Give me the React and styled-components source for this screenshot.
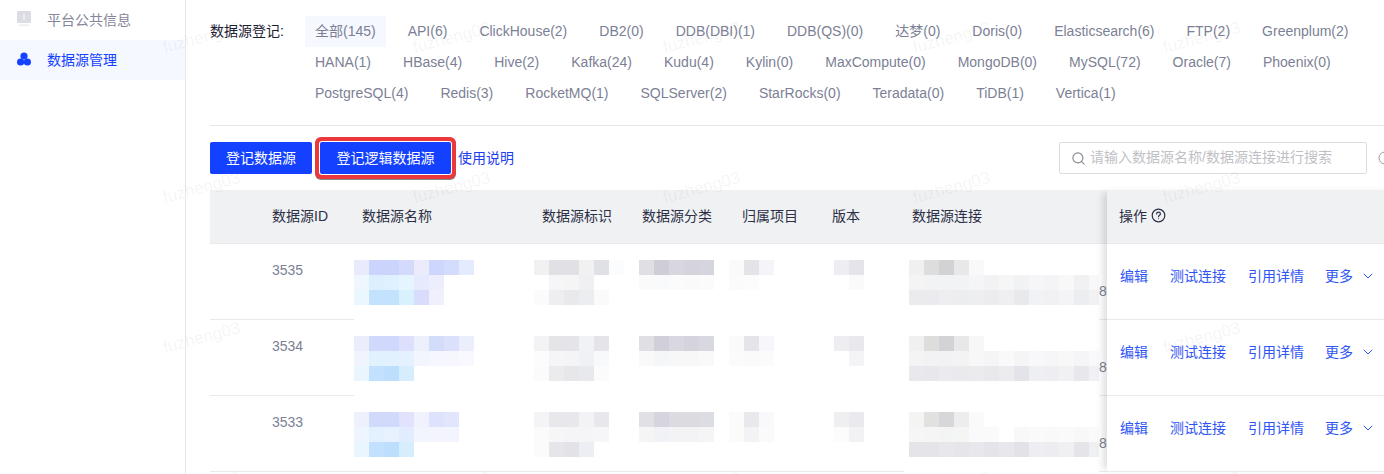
import React from "react";
import styled, { createGlobalStyle } from "styled-components";
import { ChevronDown, RotateCw, Search } from "lucide-react";

const Global = createGlobalStyle`
  html, body { margin: 0; padding: 0; background: #fff; }
  body {
    width: 1384px; height: 474px; overflow: hidden;
    font-family: "Liberation Sans", "Noto Sans CJK SC", sans-serif;
    font-size: 14px;
  }
  * { box-sizing: border-box; }
`;

const Page = styled.div`
  position: relative; display: flex; width: 1384px; height: 474px; overflow: hidden;
`;
const Sidebar = styled.nav`
  flex: 0 0 186px; border-right: 1px solid #e8e8ea;
`;
const NavItem = styled.div`
  display: flex; align-items: center; gap: 16px; height: 40px; padding: 0 0 2px 17px;
  color: ${p => (p.$active ? "#1440ff" : "#85869a")};
  background: ${p => (p.$active ? "#f5f8ff" : "transparent")};
`;
const Main = styled.main`
  flex: 0 0 1211px; padding: 16px 0 0 24px;
`;
const Filter = styled.section`
  display: flex; padding-bottom: 16px; border-bottom: 1px solid #e6e6e8;
`;
const FilterLabel = styled.div`
  flex: 0 0 95px; line-height: 31px; color: #1c2033;
`;
const TagList = styled.div`
  display: flex; flex-wrap: wrap; column-gap: 12px; width: 1075px;
`;
const Tag = styled.span`
  height: 31px; line-height: 31px; padding: 0 10px; color: #7c7f95;
  background: ${p => (p.$active ? "#f5f8ff" : "transparent")};
`;
const Toolbar = styled.div`
  display: flex; align-items: center; justify-content: space-between; margin: 16px 4px 16px 0;
`;
const Actions = styled.div`
  display: flex; align-items: center;
`;
const Button = styled.button`
  height: 32px; width: ${p => p.$w}px; margin-right: ${p => p.$mr}px; padding: 0 0 2px; border: 0; border-radius: 2px;
  background: #1440ff; color: #fff; font: inherit;
  box-shadow: ${p => (p.$marked ? "0 0 0 1px #fff, 0 0 0 5px #ea393c, 0 1px 0 5px #8a8a8a" : "none")};
`;
const GuideLink = styled.a`
  color: #1c3cf0; margin-bottom: 2px;
`;
const SearchArea = styled.div`
  display: flex; align-items: center; gap: 10px;
`;
const SearchBox = styled.label`
  display: flex; align-items: center; gap: 4px; width: 308px; height: 32px; padding-left: 11px;
  border: 1px solid #dcdde2; border-radius: 2px; color: #8a8a92;
`;
const SearchInput = styled.input`
  flex: 1; min-width: 0; border: 0; outline: 0; padding: 0 0 2px; font: inherit; background: transparent;
  &::placeholder { color: #bfbfc6; opacity: 1; }
`;
const Refresh = styled(RotateCw)`
  flex: none; color: #9a9aa2;
`;
const Table = styled.div`
  display: flex; width: 1187px;
`;
const Columns = styled.div`
  display: grid; flex: 0 0 897px;
  grid-template-columns: 54px 90px 180px 100px 100px 90px 80px 203px;
  grid-auto-rows: 76px; grid-template-rows: 54px;
`;
const HeadCell = styled.div`
  display: flex; align-items: center; padding: 0 0 3px 8px; background: #f0f1f3;
  border-bottom: 1px solid #e9e9ee; color: #2b2f45;
`;
const BodyCell = styled.div`
  border-bottom: ${p => (p.$line ? "1px solid #e9e9ef" : "1px solid transparent")};
`;
const IdCell = styled(BodyCell)`
  padding: 15px 0 0 8px; line-height: 22px; color: #7c7f95;
`;
const BlurCell = styled(BodyCell)`
  padding-top: 16px; min-width: 0;
`;
const LinkCell = styled.div`
  display: flex; min-width: 0; padding-top: 16px; padding-left: 5px; overflow: hidden;
`;
const LinkTail = styled.div`
  flex: 1; min-width: 0; margin-top: -16px; padding-top: 36px; line-height: 22px; overflow: hidden;
  white-space: nowrap; color: #7c7f95; border-bottom: 1px solid #e9e9ef;
`;
const Pixels = styled.svg`
  display: block; flex: none; margin-left: ${p => p.$shift || 0}px;
`;
const FixedColumn = styled.div`
  position: relative; z-index: 1; flex: 0 0 290px; background: #fff;
  box-shadow: -7px 0 7px -3px rgba(0, 0, 0, 0.13);
`;
const FixedHead = styled.div`
  display: flex; align-items: center; gap: 4px; height: 54px; padding: 0 0 3px 12px;
  background: #f0f1f3; border-bottom: 1px solid #e9e9ee; color: #2b2f45;
`;
const OpsRow = styled.div`
  display: flex; height: 76px; padding: 21px 0 0 13px; line-height: 22px; gap: 22px;
  border-bottom: 1px solid #e9e9ef; color: #2f55f5;
`;
const More = styled.span`
  display: flex; align-items: center; gap: 7px; margin-left: -1px; height: 22px;
`;
const Watermarks = styled.div`
  position: absolute; inset: 0; z-index: 2; pointer-events: none;
  display: grid; grid-template-columns: repeat(5, 250px); grid-auto-rows: 150px;
  padding: 23px 0 0 162px; overflow: hidden;
`;
const Mark = styled.span`
  display: block; width: 80px; height: 30px; line-height: 30px; font-size: 17px; white-space: nowrap;
  color: rgba(110, 110, 125, 0.08); transform: rotate(-15deg);
  visibility: ${p => (p.$covered ? "hidden" : "visible")};
`;

const tags = [
  "全部(145)", "API(6)", "ClickHouse(2)", "DB2(0)", "DDB(DBI)(1)", "DDB(QS)(0)", "达梦(0)", "Doris(0)", "Elasticsearch(6)", "FTP(2)", "Greenplum(2)",
  "HANA(1)", "HBase(4)", "Hive(2)", "Kafka(24)", "Kudu(4)", "Kylin(0)", "MaxCompute(0)", "MongoDB(0)", "MySQL(72)", "Oracle(7)", "Phoenix(0)",
  "PostgreSQL(4)", "Redis(3)", "RocketMQ(1)", "SQLServer(2)", "StarRocks(0)", "Teradata(0)", "TiDB(1)", "Vertica(1)",
];

const headers = ["", "数据源ID", "数据源名称", "数据源标识", "数据源分类", "归属项目", "版本", "数据源连接"];

const rows = [
  {
    id: "3535",
    name: ["e9ebfd cbd4fd cbd4fd d3dafb ebebfc cdd6fd d3dcfc e5ebfe", "f0f6fe dceffe dff0fe e4f5fe e5eafc ecedfd", "ebf7fe c3e2fe c3e2fe d9f0fe d9dcfc f0f0fd"],
    key: ["f1f1f2 e1e0e5 e1e0e5 f1f1f2 e0e1e5 fbfcfe", "ffffff f6f6f8 f5f5f6 f0f0f2 ffffff", "fafbfa eeeef0 e9e9ec ecedf0 fafafa"],
    type: ["e0dfe3 cfced8 d8d7df d5d4dd d5d5de", "fafafa f9fafb fbfbfc fafafa fbfbfb"],
    owner: ["fafafa e3e3e8 f3f5f9", "fbfbfb fbfcfc"],
    ver: ["eeeef2 e5e4ea", "ffffff fafafa"],
    conn: ["f0f0f1 dddddd d2d2d4 e8e8e8 f9f9fb", "f4f4f5 f2f3f5 f2f3f5 f2f3f5 f5f5f8 f2f2f5 f6f6f6 f1f2f4 f6f6f9 f4f4f6 f8f8f8 f1f1f3 f8f8fa", "ebebee ebebef eeeef0 ecedf0 edeef0 ebebf0 efeff1 e8e8ed f1f2f6 f1f1f4 f4f4f6 ecedf0 f2f2f5"],
  },
  {
    id: "3534",
    name: ["ebedfd d0d9fc d0d9fc dde0fc edeffb d3dcfa dbe0fb ebeffc", "f0f5fd e2f1fe e2f1fe e5f1fe f3f5fe f6f7fe f6f7fe f8f8fe", "e9f6fe c1e1fe bedefe d6edfe"],
    key: ["f3f3f5 e5e4e9 e5e4e9 f1f2f5 e5e4e9", "fcfcfc f5f5f7 f4f4f6 f0f1f4 f8f9fa", "fafbfa ebebed e7e7ea e8e9ee fbfbfb"],
    type: ["e0dfe3 d1d0da d9d8e0 d5d4dd d8d8e0", "f9f9f9 f5f6f8 f7f7f8 f7f7f8 f9f9fa"],
    owner: ["fafafa e5e4e9 f6f7fa", "fbfbfb f9fafb fbfbfc"],
    ver: ["eeedf2 e9e8ed", "ffffff f4f4f6"],
    conn: ["f0f0f1 dddddc d3d3d5 e8e8e9 f7f7f7", "f4f4f4 f2f2f4 f2f2f4 f3f3f4 f7f7f7 f5f5f7 f9f9f9 f5f5f6 f8f8fa f6f6f8 f8f8f9 f5f5f7 f9f9fb", "e8e8ed e8e8ec eaeaef e9e9ee ebebee e8e8ed ececef e3e3e9 eeeff3 eeeef2 f1f1f3 e7e7ec f1f1f5"],
  },
  {
    id: "3533",
    last: true,
    name: ["eff0fe d2dafc d2dafc e1e3fc f1f2fd dde3fc e2e6fd", "eef5fe e3f0fe e7f2fe e1edfe f2f4fe f3f4fe f3f5fe", "e9f6fe c1e1fe bedefe d6edfe"],
    key: ["f4f4f6 e8e7ec e8e7ec f3f3f5 e8e7ec", "fbfbfb f6f6f7 f5f5f7 f5f5f7 f6f6f8", "fafbfa e6e5ea e3e2e7 edeef3"],
    type: ["e1e0e4 d6d4de dcdbe2 dbdbe0 dcdde2", "f5f5f5 f1f2f5 f3f3f5 f3f3f5 f5f5f6"],
    owner: ["fbfbfb e9e8ed f8f9fb", "fbfbf9 f3f3f6 fafafa"],
    ver: ["efeff2 e9e9ee", "fcfcfc f2f2f5"],
    conn: ["f4f4f3 e1e1e0 d7d7da ededee fafafa", "f6f6f6 f5f5f5 f3f4f4 f5f5f4 f9fafb fafafb ffffff f8f8f8 fafafb f9f9fa fafafa f8f8f9 fafafb", "e4e4e9 e4e4e9 e8e8ec e5e5ea e8e8ec e4e4ea e8e8ec e2e2e8 eeeef2 ededf1 f0f0f3 e4e4e9 eff0f3"],
  },
];

const SIZE = 15;
const COVERED_MARKS = [11, 12, 13];

function Mosaic({ lines, width, shift }) {
  const grid = lines.map(l => l.split(" "));
  const w = width || Math.max(...grid.map(g => g.length)) * SIZE;
  return (
    <Pixels $shift={shift} width={w} height={grid.length * SIZE} shapeRendering="crispEdges" aria-hidden="true">
      {grid.map((cells, y) =>
        cells.map((c, x) => <rect key={`${x}-${y}`} x={x * SIZE} y={y * SIZE} width={SIZE} height={SIZE} fill={`#${c}`} />)
      )}
    </Pixels>
  );
}

const InfoIcon = () => (
  <svg width="14" height="16" viewBox="0 0 14 16" aria-hidden="true">
    <rect x="0" y="0" width="14" height="12" rx="1.5" fill="#dcdce4" />
    <rect x="6.3" y="3" width="1.4" height="6" fill="#f4f4f7" />
    <rect x="2" y="13.5" width="10" height="1.5" fill="#ececf0" />
  </svg>
);

const ClusterIcon = () => (
  <svg width="14" height="14" viewBox="0 0 14 14" aria-hidden="true">
    <circle cx="7" cy="4" r="3.6" fill="#1440ff" />
    <circle cx="3.6" cy="10" r="3.6" fill="#1440ff" />
    <circle cx="10.4" cy="10" r="3.6" fill="#1440ff" />
  </svg>
);

const HelpIcon = () => (
  <svg width="15" height="15" viewBox="0 0 15 15" fill="none" stroke="#2b2f45" strokeWidth="1.2" aria-hidden="true">
    <circle cx="7.5" cy="7.5" r="6.3" />
    <path d="M5.6 6c0-1.1.9-1.800 1.900-1.800s1.900.7 1.900 1.700c0 1.400-1.900 1.400-1.900 2.800" strokeLinecap="round" />
    <circle cx="7.5" cy="10.8" r=".5" fill="#2b2f45" stroke="none" />
  </svg>
);

export default function App() {
  return (
    <Page>
      <Global />
      <Sidebar>
        <NavItem><InfoIcon />平台公共信息</NavItem>
        <NavItem $active><ClusterIcon />数据源管理</NavItem>
      </Sidebar>
      <Main>
        <Filter>
          <FilterLabel>数据源登记:</FilterLabel>
          <TagList>
            {tags.map((t, i) => <Tag key={t} $active={i === 0}>{t}</Tag>)}
          </TagList>
        </Filter>
        <Toolbar>
          <Actions>
            <Button $w={102} $mr={8}>登记数据源</Button>
            <Button $w={131} $mr={7} $marked>登记逻辑数据源</Button>
            <GuideLink>使用说明</GuideLink>
          </Actions>
          <SearchArea>
            <SearchBox>
              <Search size={15} strokeWidth={1.8} />
              <SearchInput placeholder="请输入数据源名称/数据源连接进行搜索" />
            </SearchBox>
            <Refresh size={16} strokeWidth={1.5} />
          </SearchArea>
        </Toolbar>
        <Table>
          <Columns>
            {headers.map((h, i) => <HeadCell key={i}>{h}</HeadCell>)}
            {rows.map(r => (
              <React.Fragment key={r.id}>
                <BodyCell $line />
                <IdCell $line>{r.id}</IdCell>
                <BlurCell $line={r.last}><Mosaic lines={r.name} /></BlurCell>
                <BlurCell $line={r.last}><Mosaic lines={r.key} /></BlurCell>
                <BlurCell $line={r.last}><Mosaic lines={r.type} shift={5} /></BlurCell>
                <BlurCell $line={r.last}><Mosaic lines={r.owner} shift={-5} /></BlurCell>
                <BlurCell $line={r.last}><Mosaic lines={r.ver} shift={10} /></BlurCell>
                <LinkCell>
                  <Mosaic lines={r.conn} width={190} />
                  <LinkTail>8080</LinkTail>
                </LinkCell>
              </React.Fragment>
            ))}
          </Columns>
          <FixedColumn>
            <FixedHead>操作 <HelpIcon /></FixedHead>
            {rows.map(r => (
              <OpsRow key={r.id}>
                <span>编辑</span>
                <span>测试连接</span>
                <span>引用详情</span>
                <More>更多 <ChevronDown size={16} strokeWidth={1.5} /></More>
              </OpsRow>
            ))}
          </FixedColumn>
        </Table>
      </Main>
      <Watermarks>
        {Array.from({ length: 20 }, (_, i) => <Mark key={i} $covered={COVERED_MARKS.includes(i)}>fuzheng03</Mark>)}
      </Watermarks>
    </Page>
  );
}
